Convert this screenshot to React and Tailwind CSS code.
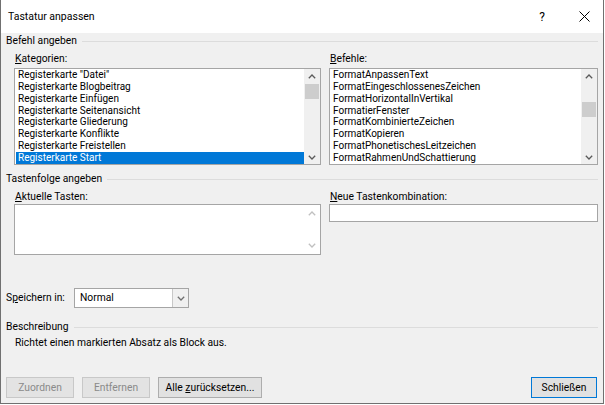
import React from 'react'

const kategorien = [
  'Registerkarte "Datei"',
  'Registerkarte Blogbeitrag',
  'Registerkarte Einfügen',
  'Registerkarte Seitenansicht',
  'Registerkarte Gliederung',
  'Registerkarte Konflikte',
  'Registerkarte Freistellen',
  'Registerkarte Start',
]

const befehle = [
  'FormatAnpassenText',
  'FormatEingeschlossenesZeichen',
  'FormatHorizontalInVertikal',
  'FormatierFenster',
  'FormatKombinierteZeichen',
  'FormatKopieren',
  'FormatPhonetischesLeitzeichen',
  'FormatRahmenUndSchattierung',
]

function Chevron({ up, color = '#5a5a5a' }) {
  return (
    <svg width="8" height="5" viewBox="0 0 8 5">
      <path
        d={up ? 'M0.8 4.2 L4 1 L7.2 4.2' : 'M0.8 0.8 L4 4 L7.2 0.8'}
        fill="none"
        stroke={color}
        strokeWidth="1.3"
      />
    </svg>
  )
}

function GroupHeader({ children }) {
  return (
    <div className="flex items-center h-[16px] leading-[16px]">
      <span>{children}</span>
      <div className="flex-1 h-px bg-[#dcdcdc] ml-[5px]" />
    </div>
  )
}

function ListBox({ items, selected, thumbTop }) {
  return (
    <div className="flex h-[97px] border border-[#a5a5a5] bg-white">
      <div className="flex-1 pl-[1px] text-[10px]">
        {items.map((it, i) => (
          <div
            key={it}
            className={`h-[11.86px] leading-[11.86px] pl-[2px] whitespace-nowrap ${
              i === selected ? 'bg-[#0078d7] text-white' : ''
            }`}
          >
            {it}
          </div>
        ))}
      </div>
      <div className="w-[16px] flex flex-col bg-[#f0f0f0]">
        <div className="h-[14px] flex items-center justify-center">
          <Chevron up />
        </div>
        <div className="flex-1">
          <div className={`${thumbTop} h-[15px] mx-[1px] bg-[#cdcdcd]`} />
        </div>
        <div className="h-[14px] flex items-center justify-center">
          <Chevron />
        </div>
      </div>
    </div>
  )
}

function Button({ children, disabled, primary, w }) {
  return (
    <div
      className={`${w} h-[21px] flex items-center justify-center ${
        disabled
          ? 'bg-[#e3e3e3] border border-[#c8c8c8] text-[#8a8a8a]'
          : primary
          ? 'bg-[#e1e1e1] border-[1.5px] border-[#0078d7]'
          : 'bg-[#e1e1e1] border border-[#adadad]'
      }`}
    >
      {children}
    </div>
  )
}

export default function App() {
  return (
    <div className="w-[605px] h-[405px] bg-white">
      <div className="w-[604px] h-[404px] bg-[#f0f0f0] border-l border-r border-b border-[#707070] flex flex-col font-['Roboto',sans-serif] text-[10.3px] text-black">
        {/* Title bar */}
        <div className="h-[33px] bg-white flex items-center pl-[7px]">
          <span className="flex-1 text-[10.5px]">Tastatur anpassen</span>
          <span className="w-[12px] text-center text-[12px] mr-[31px]">?</span>
          <svg width="11" height="11" viewBox="0 0 11 11" className="mr-[13px]">
            <path d="M0.5 0.5 L10.5 10.5 M10.5 0.5 L0.5 10.5" stroke="#000" strokeWidth="1" />
          </svg>
        </div>

        <div className="flex-1 flex flex-col pl-[5px] pr-[5px]">
          <GroupHeader>Befehl angeben</GroupHeader>

          <div className="flex pl-[8px] gap-[8px] mt-[2px]">
            <div className="w-[307px] flex flex-col">
              <div className="h-[16px] leading-[16px] pl-[1px] mb-[1px]">
                <u>K</u>ategorien:
              </div>
              <ListBox items={kategorien} selected={7} thumbTop="mt-[1px]" />
            </div>
            <div className="flex-1 flex flex-col">
              <div className="h-[16px] leading-[16px] pl-[1px] mb-[1px]">
                <u>B</u>efehle:
              </div>
              <ListBox items={befehle} selected={-1} thumbTop="mt-[19px]" />
            </div>
          </div>

          <div className="mt-[6px]">
            <GroupHeader>Tastenfolge angeben</GroupHeader>
          </div>

          <div className="flex pl-[8px] gap-[8px] mt-[2px]">
            <div className="w-[307px] flex flex-col">
              <div className="h-[15px] leading-[16px] pl-[1px]">
                <u>A</u>ktuelle Tasten:
              </div>
              <div className="flex h-[51px] border border-[#a5a5a5] bg-white">
                <div className="flex-1" />
                <div className="w-[16px] flex flex-col justify-between py-[6px] items-center">
                  <Chevron up color="#c0c0c0" />
                  <Chevron color="#c0c0c0" />
                </div>
              </div>
            </div>
            <div className="flex-1 flex flex-col">
              <div className="h-[15px] leading-[16px] pl-[1px]">
                <u>N</u>eue Tastenkombination:
              </div>
              <div className="h-[18px] border border-[#a5a5a5] bg-white" />
            </div>
          </div>

          <div className="flex items-center mt-[33px] h-[20px]">
            <span className="w-[68px]">
              S<u>p</u>eichern in:
            </span>
            <div className="w-[115px] h-[20px] flex border border-[#a5a5a5] bg-white">
              <span className="flex-1 pl-[5px] leading-[18px]">Normal</span>
              <div className="w-[16px] h-[18px] border-l border-[#c8c8c8] bg-[#f0f0f0] flex items-center justify-center">
                <Chevron color="#707070" />
              </div>
            </div>
          </div>

          <div className="mt-[11px]">
            <GroupHeader>Beschreibung</GroupHeader>
          </div>
          <div className="pl-[9px] h-[15px] leading-[15px]">
            Richtet einen markierten Absatz als Block aus.
          </div>

          <div className="flex mt-[27px] gap-[8px]">
            <Button disabled w="w-[68px]">Zuordnen</Button>
            <Button disabled w="w-[68px]">Entfernen</Button>
            <Button w="w-[104px]">
              <span>
                Alle <u>z</u>urücksetzen...
              </span>
            </Button>
            <div className="flex-1" />
            <div className="mr-[1px]">
              <Button primary w="w-[66px]">Schließen</Button>
            </div>
          </div>
        </div>
      </div>
    </div>
  )
}
